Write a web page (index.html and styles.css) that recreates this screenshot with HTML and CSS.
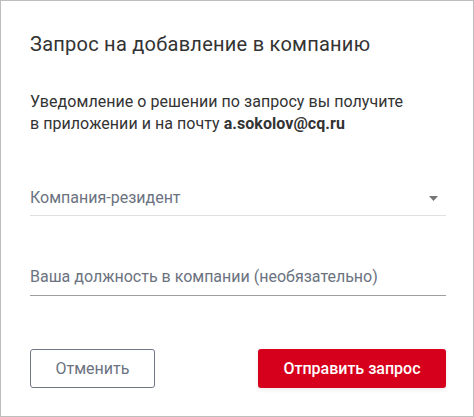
FILE: index.html
```html
<!DOCTYPE html>
<html lang="ru">
<head>
<meta charset="utf-8">
<link rel="stylesheet" href="styles.css">
</head>
<body>
<div class="dialog">
  <h1 class="title">Запрос на добавление в компанию</h1>
  <p class="note">Уведомление о решении по запросу вы получите<br>в приложении и на почту <b>a.sokolov@cq.ru</b></p>
  <div class="field field-select">
    <span class="placeholder">Компания-резидент</span>
    <svg class="caret" width="9" height="5" viewBox="0 0 9 5"><path d="M0 0h9L4.5 5z" fill="#757575"/></svg>
  </div>
  <div class="field field-input">
    <span class="placeholder">Ваша должность в компании (необязательно)</span>
  </div>
  <div class="actions">
    <button class="btn btn-cancel">Отменить</button>
    <button class="btn btn-send">Отправить запрос</button>
  </div>
</div>
</body>
</html>
```
FILE: styles.css
```css
* { box-sizing: border-box; }
html, body { margin: 0; padding: 0; background: #fff; }
body { font-family: Roboto, "Noto Sans", sans-serif; color: #333; }
.dialog {
  width: 474px;
  height: 417px;
  border: 1px solid #bdbdbd;
  padding: 31px 27px 0 29px;
}
.title {
  margin: 0;
  font-size: 20px;
  line-height: 24px;
  font-weight: 400;
  letter-spacing: 0.25px;
  color: #333;
}
.note {
  margin: 35px 0 0;
  font-size: 16px;
  line-height: 22px;
  letter-spacing: 0.05px;
  color: #333;
}
.note b { font-weight: 700; color: #333; }
.field {
  display: flex;
  align-items: center;
  justify-content: space-between;
  font-size: 16px;
  line-height: 20px;
  color: #6b7280;
}
.field-select {
  margin-top: 53px;
  padding-bottom: 7px;
  border-bottom: 1px solid #e0e0e0;
}
.caret { margin-right: 8px; }
.field-input {
  margin-top: 51px;
  padding-bottom: 8px;
  border-bottom: 1px solid #9e9e9e;
}
.actions {
  margin-top: 53px;
  display: flex;
  justify-content: space-between;
}
.btn {
  height: 39px;
  font-family: inherit;
  font-size: 16px;
  border-radius: 3px;
  cursor: pointer;
}
.btn-cancel {
  width: 125px;
  background: #fff;
  border: 1px solid #6e7885;
  color: #6b7280;
}
.btn-send {
  width: 188px;
  background: #d6001c;
  border: none;
  color: #fff;
  font-weight: 500;
  box-shadow: 0 2px 4px rgba(0,0,0,0.08);
}
```
